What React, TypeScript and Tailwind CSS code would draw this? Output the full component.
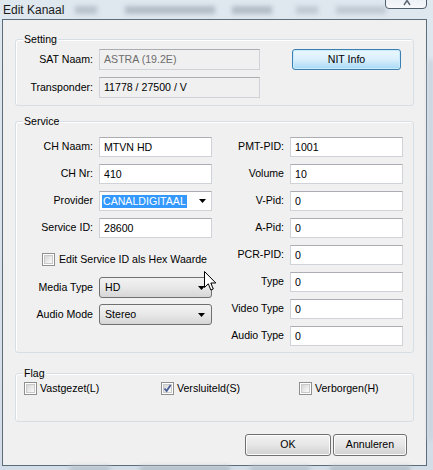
import React from "react";

const Field = ({ value, cls, textCls }: { value: string; cls: string; textCls?: string }) => (
  <div
    className={
      "flex items-center border border-[#cfd3d8] border-t-[#abadb3] pl-[4px] leading-none " + cls
    }
  >
    <span className={textCls ?? "text-black"}>{value}</span>
  </div>
);

const Arrow = () => (
  <svg width="7" height="4" viewBox="0 0 7 4" className="block">
    <path d="M0 0H7L3.5 4Z" fill="#000" />
  </svg>
);

const Check = ({ checked }: { checked?: boolean }) => (
  <div className="w-[13px] h-[13px] border border-[#8e8f8f] bg-white p-[1px] shrink-0">
    <div className="w-full h-full bg-gradient-to-br from-[#d6d6d6] to-[#fbfbfb] border border-[#c9c9c9] relative">
      {checked && (
        <svg width="9" height="9" viewBox="0 0 9 9" className="absolute -left-[1px] -top-[1px]">
          <path d="M1.5 4.5L3.6 7L7.6 1" stroke="#4a5f97" strokeWidth="1.8" fill="none" />
        </svg>
      )}
    </div>
  </div>
);

const Combo = ({ value }: { value: string }) => (
  <div className="w-[113px] h-[21px] border border-[#707070] rounded-[3px] bg-gradient-to-b from-[#f2f2f2] via-[#e8e8e8] to-[#d6d6d6] flex items-center justify-between pl-[5px] pr-[6px]">
    <span>{value}</span>
    <Arrow />
  </div>
);

const Row = ({ label, labelW, children }: { label: string; labelW: string; children: React.ReactNode }) => (
  <div className="flex items-center">
    <div className={"text-right " + labelW}>{label}</div>
    <div className="ml-[6px]">{children}</div>
  </div>
);

const Group = ({ title, cls, children }: { title: string; cls: string; children: React.ReactNode }) => (
  <div className={"relative w-[399px] border border-[#d5dfe5] rounded-[3px] shadow-[inset_1px_1px_0_#ffffff] " + cls}>
    <span className="absolute left-[7px] -top-[8px] px-[1px] bg-[#f0f0f0] leading-[14px]">{title}</span>
    {children}
  </div>
);

export default function App() {
  const right = [
    ["PMT-PID:", "1001"],
    ["Volume", "10"],
    ["V-Pid:", "0"],
    ["A-Pid:", "0"],
    ["PCR-PID:", "0"],
    ["Type", "0"],
    ["Video Type", "0"],
    ["Audio Type", "0"],
  ];
  return (
    <div className="relative w-[433px] h-[470px] overflow-hidden bg-gradient-to-b from-[#dfe7ef] to-[#d3dde7] font-['Liberation_Sans',Arial,sans-serif] text-[10.6px] text-black">
      {/* blurred background behind glass */}
      <div className="absolute left-[75px] top-[6px] w-[22px] h-[8px] bg-[#b9c3cd] blur-[2px]" />
      <div className="absolute left-[125px] top-[6px] w-[90px] h-[8px] bg-[#b4bec8] blur-[2px]" />
      <div className="absolute left-[232px] top-[6px] w-[40px] h-[8px] bg-[#b4bec8] blur-[2px]" />
      <div className="absolute left-[296px] top-[6px] w-[22px] h-[8px] bg-[#c1cad3] blur-[2px]" />
      <div className="absolute left-[336px] top-[6px] w-[50px] h-[8px] bg-[#c1cad3] blur-[2px]" />
      <div className="absolute left-[70px] top-[466px] w-[40px] h-[6px] bg-[#b9c3cd] blur-[2px]" />
      <div className="absolute left-[140px] top-[466px] w-[90px] h-[6px] bg-[#b4bec8] blur-[2px]" />
      <div className="absolute left-[250px] top-[466px] w-[60px] h-[6px] bg-[#b9c3cd] blur-[2px]" />
      <div className="absolute left-[330px] top-[466px] w-[80px] h-[6px] bg-[#b4bec8] blur-[2px]" />
      <div className="absolute left-[428px] top-[60px] w-[5px] h-[380px] bg-[#c6d2de] blur-[2px]" />

      {/* close button (clipped) */}
      <div className="absolute left-[385px] -top-[6px] w-[42px] h-[15px] border border-[#4f5e6c] rounded-b-[4px] bg-gradient-to-b from-[#e8eef4] to-[#f6f8fa] overflow-hidden">
        <svg width="12" height="10" viewBox="0 0 12 10" className="absolute left-[15px] top-[1px]">
          <path d="M2 0L6 4.5L10 0M6 4.5L3 9M6 4.5L9 9" stroke="#5a6470" strokeWidth="1.4" fill="none" />
        </svg>
      </div>

      <div className="relative h-[19px] flex items-center pl-[3px] text-[12px] text-[#1b1b1b]">Edit Kanaal</div>

      <div className="ml-[2px] w-[425px] h-[447px] border border-[#5d6c79] bg-[#f0f0f0] pl-[12px] pt-[19px]">
        {/* Setting */}
        <Group title="Setting" cls="h-[67px] pt-[9px]">
          <div className="flex items-center">
            <Row label="SAT Naam:" labelW="w-[77px]">
              <Field value="ASTRA (19.2E)" cls="w-[161px] h-[21px] bg-[#f0f0f0]" textCls="text-[#6d6d6d]" />
            </Row>
            <div className="ml-[32px] w-[109px] h-[21px] rounded-[3px] border border-[#3c7fb1] bg-gradient-to-b from-[#eaf6fd] via-[#d9f0fc] to-[#a7d9f5] shadow-[inset_0_0_0_1px_#c8ecfc] flex items-center justify-center">
              NIT Info
            </div>
          </div>
          <div className="mt-[7px]">
            <Row label="Transponder:" labelW="w-[77px]">
              <Field value="11778 / 27500 / V" cls="w-[161px] h-[21px] bg-[#f0f0f0]" />
            </Row>
          </div>
        </Group>

        {/* Service */}
        <Group title="Service" cls="mt-[15px] h-[232px] pt-[15px] flex">
          <div className="flex flex-col">
            <div className="flex flex-col gap-[7px]">
              <Row label="CH Naam:" labelW="w-[77px]">
                <Field value="MTVN HD" cls="w-[113px] h-[20px] bg-white" />
              </Row>
              <Row label="CH Nr:" labelW="w-[77px]">
                <Field value="410" cls="w-[113px] h-[20px] bg-white" />
              </Row>
              <Row label="Provider" labelW="w-[77px]">
                <div className="w-[113px] h-[20px] bg-white border border-[#cfd3d8] border-t-[#abadb3] flex items-center pl-[2px] pr-[5px] justify-between">
                  <span className="bg-[#3399ff] text-white px-[1px] leading-[13px]">CANALDIGITAAL</span>
                  <Arrow />
                </div>
              </Row>
              <Row label="Service ID:" labelW="w-[77px]">
                <Field value="28600" cls="w-[113px] h-[20px] bg-white" />
              </Row>
            </div>
            <div className="mt-[15px] pl-[26px] flex items-center h-[13px]">
              <Check />
              <span className="ml-[4px]">Edit Service ID als Hex Waarde</span>
            </div>
            <div className="mt-[11px]">
              <Row label="Media Type" labelW="w-[77px]">
                <Combo value="HD" />
              </Row>
            </div>
            <div className="mt-[6px]">
              <Row label="Audio Mode" labelW="w-[77px]">
                <Combo value="Stereo" />
              </Row>
            </div>
          </div>
          <div className="flex flex-col gap-[7px]">
            {right.map(([l, v]) => (
              <Row key={l} label={l} labelW="w-[72px]">
                <Field value={v} cls="w-[113px] h-[20px] bg-white" />
              </Row>
            ))}
          </div>
        </Group>

        {/* Flag */}
        <Group title="Flag" cls="mt-[20px] h-[49px] pt-[8px] pl-[8px] flex">
          <div className="w-[137px] flex items-center h-[13px]">
            <Check />
            <span className="ml-[3px]">Vastgezet(L)</span>
          </div>
          <div className="w-[138px] flex items-center h-[13px]">
            <Check checked />
            <span className="ml-[3px]">Versluiteld(S)</span>
          </div>
          <div className="flex items-center h-[13px]">
            <Check />
            <span className="ml-[3px]">Verborgen(H)</span>
          </div>
        </Group>

        {/* Buttons */}
        <div className="mt-[12px] pl-[230px] flex">
          <div className="w-[86px] h-[22px] rounded-[3px] border border-[#707070] bg-gradient-to-b from-[#f2f2f2] via-[#e6e6e6] to-[#d0d0d0] shadow-[inset_0_0_0_1px_#fcfcfc] flex items-center justify-center">
            OK
          </div>
          <div className="ml-[2px] w-[74px] h-[22px] rounded-[3px] border border-[#707070] bg-gradient-to-b from-[#f2f2f2] via-[#e6e6e6] to-[#d0d0d0] shadow-[inset_0_0_0_1px_#fcfcfc] flex items-center justify-center">
            Annuleren
          </div>
        </div>
      </div>

      {/* mouse cursor */}
      <svg width="13" height="21" viewBox="0 0 13 21" className="absolute left-[204px] top-[271px]">
        <path d="M0.5 0.5V16.5L4.3 12.8L6.8 19L9.3 18L6.8 12H11.8Z" fill="#fff" stroke="#000" strokeWidth="1" strokeLinejoin="round" />
      </svg>
    </div>
  );
}
